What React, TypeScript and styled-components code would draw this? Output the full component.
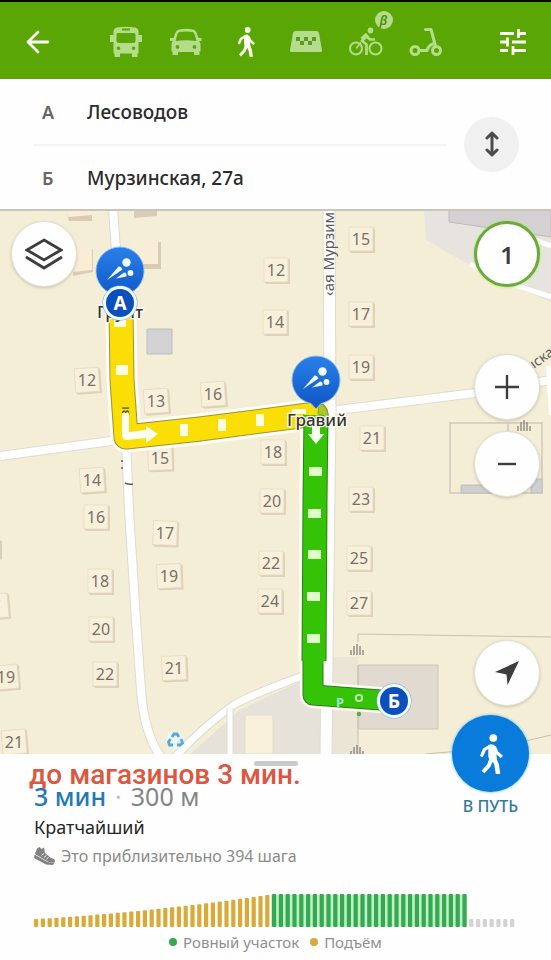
import React from 'react';
import styled, { createGlobalStyle, css } from 'styled-components';

const GlobalStyle = createGlobalStyle`
  *, *::before, *::after { box-sizing: border-box; }
  body { margin: 0; background: #fefefe; font-family: 'Noto Sans', 'Open Sans', sans-serif; color: #2b2b2b; }
  button, input { font: inherit; color: inherit; }
`;

const Page = styled.main`
  display: flex;
  flex-direction: column;
  min-height: 100vh;
`;

const TopBar = styled.header`
  display: flex;
  align-items: center;
  justify-content: space-between;
  height: 79px;
  padding: 2px 8px 0;
  border-top: 2px solid #050a02;
  background: #59a604;
`;

const Modes = styled.nav`
  display: flex;
`;

const BarButton = styled.button<{ $dim?: boolean }>`
  position: relative;
  display: flex;
  align-items: center;
  justify-content: center;
  width: 60px;
  height: 60px;
  padding: 0;
  border: 0;
  background: none;
  color: ${(p) => (p.$dim ? '#b5dc8b' : '#fbfff2')};
`;

const Beta = styled.span`
  position: absolute;
  top: -1px;
  right: 3px;
  width: 18px;
  height: 18px;
  border-radius: 50%;
  background: #b5dc8b;
  color: #4f8f0a;
  font: italic 600 13px/18px 'Noto Sans', sans-serif;
  text-align: center;
`;

const Addresses = styled.form`
  display: flex;
  align-items: center;
  gap: 17px;
  padding: 0 32px 0 33px;
  background: #fefefe;
`;

const Fields = styled.div`
  flex: 1;
  min-width: 0;
`;

const Field = styled.div`
  display: flex;
  align-items: center;
  height: 65px;
  & + & { border-top: 2px solid #f5f5f5; }
`;

const FieldLabel = styled.label`
  width: 54px;
  padding-left: 9px;
  color: #666;
  font-size: 18px;
  font-weight: 600;
`;

const FieldInput = styled.input`
  flex: 1;
  min-width: 0;
  height: 40px;
  padding: 0;
  border: 0;
  background: none;
  font-size: 19px;
  font-weight: 500;
`;

const SwapButton = styled.button`
  display: grid;
  place-items: center;
  width: 55px;
  height: 55px;
  padding: 0;
  border: 0;
  border-radius: 50%;
  background: #f0f0f0;
  color: #4b4b4b;
`;

const MapArea = styled.section`
  position: relative;
  flex: 1;
  min-height: 440px;
  overflow: hidden;
  background: #f4eed6;
`;

const MapCanvas = styled.svg`
  position: absolute;
  inset: 0;
  width: 100%;
  height: 100%;
  font-family: 'Noto Sans', sans-serif;
`;

const MapControls = styled.div`
  position: absolute;
  inset: 12px 11px 48px;
  display: flex;
  align-items: flex-start;
  justify-content: space-between;
  pointer-events: none;
`;

const ControlColumn = styled.div`
  display: flex;
  flex-direction: column;
  height: 100%;
`;

const RoundButton = styled.button<{ $place?: 'bottom'; $ring?: boolean }>`
  display: grid;
  place-items: center;
  width: 66px;
  height: 66px;
  padding: 0;
  border: ${(p) => (p.$ring ? '3px solid #6aaa38' : '1px solid #e2dfd6')};
  border-radius: 50%;
  background: #fefefe;
  color: #3d3d3d;
  font-size: 24px;
  font-weight: 600;
  pointer-events: auto;
  box-shadow: ${(p) => (p.$ring ? '0 0 3px #a6e870' : '0 1px 3px rgba(110, 100, 80, 0.3)')};
  ${(p) => p.$place === 'bottom' && css`margin-top: auto;`}
`;

const ZoomGroup = styled.div`
  display: flex;
  flex-direction: column;
  gap: 11px;
  margin-top: 67px;
`;

const Sheet = styled.section`
  position: relative;
  padding: 7px 34px 4px;
  background: #fefefe;
`;

const Handle = styled.div`
  width: 44px;
  height: 5px;
  margin: 0 auto 13px;
  border-radius: 3px;
  background: #c9c9c9;
`;

const Note = styled.p`
  position: absolute;
  top: 4px;
  left: 29px;
  margin: 0;
  color: #dc5640;
  font: 500 28px/34px Roboto, sans-serif;
  white-space: nowrap;
`;

const Summary = styled.p`
  display: flex;
  gap: 9px;
  margin: 0;
  color: #858585;
  font-size: 25px;
  line-height: 34px;
`;

const Duration = styled.strong`
  color: #2279b5;
  font-weight: 500;
`;

const Separator = styled.span`
  color: #c0c0c0;
`;

const RouteName = styled.h1`
  margin: 0;
  color: #262626;
  font-size: 18px;
  font-weight: 400;
  line-height: 28px;
`;

const Steps = styled.p`
  display: flex;
  align-items: center;
  gap: 6px;
  margin: 0;
  color: #8b8b8b;
  font-size: 16px;
  line-height: 30px;
`;

const Chart = styled.svg`
  display: block;
  width: 100%;
  height: 34px;
  margin-top: 23px;
`;

const Legend = styled.ul`
  display: flex;
  justify-content: center;
  gap: 11px;
  margin: 0;
  padding: 0;
  color: #8f8f8f;
  font-size: 15px;
  line-height: 28px;
  list-style: none;
`;

const LegendItem = styled.li<{ $color: string }>`
  display: flex;
  align-items: center;
  gap: 6px;
  &::before {
    content: '';
    width: 8px;
    height: 8px;
    border-radius: 50%;
    background: ${(p) => p.$color};
  }
`;

const GoButton = styled.button`
  position: absolute;
  top: -39px;
  right: 22px;
  display: flex;
  flex-direction: column;
  align-items: center;
  width: 77px;
  padding: 0;
  border: 0;
  background: none;
  color: #35799a;
  font-size: 16px;
  font-weight: 500;
  line-height: 28px;
`;

const GoDisc = styled.span`
  display: grid;
  place-items: center;
  width: 77px;
  height: 77px;
  border-radius: 50%;
  background: #097bda;
  box-shadow: 0 0 3px #52b5f5;
  color: #fff;
`;

const BackIcon = () => (
  <svg width="24" height="24" viewBox="0 0 24 24" fill="none" stroke="currentColor" strokeWidth="2.8" strokeLinecap="round" strokeLinejoin="round">
    <path d="M22 12H2M12 2 2 12l10 10" />
  </svg>
);

const BusIcon = () => (
  <svg width="34" height="32" viewBox="0 0 34 32">
    <path fill="currentColor" fillRule="evenodd" d="M8 1.500Q17 0 26 1.500Q29.500 2 29.500 6v3h3.500v7h-3.500v11.500h-1V31H23v-3.500H11V31H5.500v-3.500h-1V16H1V9h3.500V6Q4.500 2 8 1.500ZM13 2.600v1.800h8V2.600ZM9 7Q7.500 7 7.500 8.500v6Q7.500 17 10 17h14q2.500 0 2.500-2.500v-6Q26.500 7 25 7ZM9.500 20.500a1.800 1.800 0 1 0 0 3.600 1.800 1.800 0 0 0 0-3.600ZM24.500 20.500a1.800 1.800 0 1 0 0 3.600 1.800 1.800 0 0 0 0-3.600Z" />
  </svg>
);

const CarIcon = () => (
  <svg width="34" height="28" viewBox="0 0 34 28">
    <path fill="currentColor" fillRule="evenodd" d="M10 1.500Q17 0 24 1.500q2.500.5 3.500 3L29.500 10h3v3H30q1.500 1.500 1.500 4v6.500h-1V27H25v-3H9v3H3.500v-3.500h-1V17Q2.500 14.500 4 13H1v-3h3.500l2-5.500q1-2.500 3.500-3ZM10.500 4Q9 4.300 8.500 6L6.500 13Q17 11.500 27.500 13l-2-7Q25 4.300 23.500 4 17 3 10.500 4ZM8.500 17a1.900 1.900 0 1 0 0 3.800 1.900 1.900 0 0 0 0-3.800ZM25.500 17a1.900 1.900 0 1 0 0 3.800 1.900 1.900 0 0 0 0-3.800Z" />
  </svg>
);

const WalkIcon = ({ width, height }: { width: number; height: number }) => (
  <svg width={width} height={height} viewBox="0 0 18 30" fill="none" stroke="currentColor" strokeLinecap="butt" strokeLinejoin="round">
    <circle cx="10.700" cy="3" r="2.900" fill="currentColor" stroke="none" />
    <path fill="currentColor" stroke="none" d="M7 8.500Q10 6.500 12 9l1 5 .5 6.500-5 1-1.500-4.500Z" />
    <path strokeWidth="2.400" d="M8.500 9 4 11.800 1.700 17M11.500 9.500l2 4.500 3.700 3.200" />
    <path strokeWidth="3" d="M9.500 18 7.500 23.500 3 28.500" />
    <path strokeWidth="3.400" d="m11 18 2.200 5L14.300 30" />
  </svg>
);

const TaxiIcon = () => (
  <svg width="34" height="24" viewBox="0 0 34 24">
    <path fill="currentColor" d="M7 1h20q2.500 0 3 2l3 17q.5 2-1 2H2Q.500 22 1 20L4 3q.5-2 3-2Z" />
    <path fill="#5b9a22" d="M7 7h4v4H7ZM15 7h4v4h-4ZM23 7h4v4h-4ZM11 11h4v4h-4ZM19 11h4v4h-4Z" />
  </svg>
);

const BikeIcon = () => (
  <svg width="34" height="30" viewBox="0 0 34 30" fill="none" stroke="currentColor" strokeWidth="2">
    <circle cx="7" cy="21.500" r="6" />
    <circle cx="26.500" cy="21.500" r="6" />
    <circle cx="21.500" cy="3.500" r="2.900" fill="currentColor" stroke="none" />
    <path strokeWidth="4.500" strokeLinejoin="round" d="m18.500 7.500-5.500 5" />
    <path strokeWidth="2.700" strokeLinejoin="round" d="m12 13 5.500 4.500V28M17.500 9l3.500 3.500h5" />
    <path strokeWidth="1.500" d="m7 21.500 5-6" />
  </svg>
);

const ScooterIcon = () => (
  <svg width="34" height="30" viewBox="0 0 34 30" fill="none" stroke="currentColor" strokeWidth="3" strokeLinecap="round" strokeLinejoin="round">
    <circle cx="6" cy="23.500" r="4" />
    <circle cx="27.500" cy="23.500" r="4" />
    <path d="M10.500 23.500H18q2-6.500 8-7M16.500 2.500H22L26.500 19" />
  </svg>
);

const FilterIcon = () => (
  <svg width="26" height="26" viewBox="0 0 26 26" fill="none" stroke="currentColor" strokeWidth="2.800">
    <path d="M0 4.500h14M18.500 0v9M18 4.500h8M0 13h8M7.500 8.500v9M12 13h14M0 21.500h8M13 17v9M13 21.500h13" />
  </svg>
);

const SwapIcon = () => (
  <svg width="16" height="26" viewBox="0 0 16 26" fill="none" stroke="currentColor" strokeWidth="3" strokeLinecap="round" strokeLinejoin="round">
    <path d="M8 2v22M3 7l5-5 5 5M3 19l5 5 5-5" />
  </svg>
);

const LayersIcon = () => (
  <svg width="38" height="32" viewBox="0 0 38 32" fill="none" stroke="currentColor" strokeWidth="2.800">
    <path d="m19 2 17 10-17 10L2 12ZM1 19l18 11 18-11" />
  </svg>
);

const PlusMinusIcon = ({ plus }: { plus?: boolean }) => (
  <svg width="24" height="24" viewBox="0 0 24 24" stroke="currentColor" strokeWidth="2.400">
    <path d={plus ? 'M0 12h24M12 0v24' : 'M3 12h18'} />
  </svg>
);

const LocateIcon = () => (
  <svg width="24" height="24" viewBox="0 0 24 24" fill="currentColor">
    <path d="M24 0 12.500 24 11.500 13.500 0 11Z" />
  </svg>
);

const ShoeIcon = () => (
  <svg width="21" height="20" viewBox="0 0 21 20">
    <path fill="#828282" d="M3 2.500 5.500 1l2 2L10 1.500l1 5.500 6 5q4 .5 4 3l-.5 1.500-6-.5L1 8Z" />
    <path fill="#828282" d="M.500 8.500 13.500 16l7 .7-1.500 2.300-7-.5L0 12Z" />
    <path stroke="#fefefe" strokeWidth="1" d="m10 7.500-2.500 1.800M12.500 9.500 10 11.300M14.500 11.500 12.500 13" />
  </svg>
);

const HOUSES: [string, number, number, number][] = [
  ['15', 361, 239, 0], ['12', 276, 270, 0], ['14', 275, 322, 0], ['17', 361, 314, 0],
  ['19', 361, 367, 0], ['12', 87, 380, -4], ['13', 156, 401, -4], ['16', 213, 394, -4],
  ['15', 160, 458, -2], ['18', 273, 452, 0], ['21', 372, 438, 0], ['14', 92, 480, -4],
  ['16', 96, 517, 0], ['17', 165, 533, 2], ['20', 272, 501, 0], ['23', 361, 499, 0],
  ['18', 100, 581, 0], ['19', 169, 576, -2], ['22', 271, 563, 0], ['25', 359, 558, 0],
  ['24', 270, 601, 0], ['27', 359, 603, 0], ['20', 101, 629, 0], ['22', 105, 674, 0],
  ['21', 174, 668, -2], ['19', 6, 677, -5], ['21', 14, 742, -5], ['7', -4, 606, -5],
];

const ROUTE_YELLOW = 'M121 312 122 380 126 437 200 429 316 414';
const ROUTE_GREEN = 'M316 414 315 500 314 661';
const ROUTE_TAIL = 'M313 655V695L394 701';

const House = ({ label, x, y, angle }: { label: string; x: number; y: number; angle: number }) => (
  <g transform={`translate(${x} ${y})`}>
    <g transform={`rotate(${angle})`}>
      <path d="M-12-12h24l2 2v24h-24l-2-2Z" fill="#ddd1b8" />
      <path d="M-12-12h24v24h-24Z" fill="#f9f0db" stroke="#e4d9bf" strokeWidth="0.700" />
    </g>
    <text y="6" textAnchor="middle" fontSize="16" fill="#77716a">{label}</text>
  </g>
);

const SurfacePin = ({ x, y }: { x: number; y: number }) => (
  <g transform={`translate(${x} ${y})`}>
    <path d="M0 29-5 23.500A24 24 0 1 1 5 23.500Z" fill="url(#pin)" stroke="#8fc2f0" strokeWidth="1" />
    <g fill="#f2fbff">
      <circle cx="6.500" cy="-8.500" r="4.200" />
      <circle cx="10.500" cy="2" r="2.900" />
      <path d="m-13 9 11.500-13.500Q1-5 2.500-1.500ZM-4 7.500 4 1.500q3 0 2.500 4Z" />
    </g>
  </g>
);

const EndMarker = ({ x, y, label }: { x: number; y: number; label: string }) => (
  <g>
    <circle cx={x} cy={y} r="17.500" fill="#78a7d4" />
    <circle cx={x} cy={y} r="17" fill="#f1faff" />
    <circle cx={x} cy={y} r="14" fill="#0b4fbd" />
    <text x={x} y={y + 7} textAnchor="middle" fontSize="19" fontWeight="700" fill="#fff">{label}</text>
  </g>
);

const Gate = ({ x, y }: { x: number; y: number }) => (
  <path d={`M${x - 6} ${y + 5}v-5M${x - 3} ${y + 5}v-9M${x} ${y + 5}v-11M${x + 3} ${y + 5}v-9M${x + 6} ${y + 5}v-5`} stroke="#88807a" strokeWidth="1.300" />
);

const Road = ({ d, width }: { d: string; width: number }) => (
  <g fill="none" strokeLinejoin="round">
    <path d={d} stroke="#dedbd3" strokeWidth={width + 2} />
    <path d={d} stroke="#fefefe" strokeWidth={width} />
  </g>
);

const RouteLine = ({ d, color, edge, width }: { d: string; color: string; edge: string; width: number }) => (
  <g fill="none" strokeLinejoin="round">
    <path d={d} stroke={edge} strokeWidth={width + 1} />
    <path d={d} stroke={color} strokeWidth={width - 1} />
  </g>
);

const CityMap = () => (
  <MapCanvas viewBox="0 209 551 545" preserveAspectRatio="xMidYMid slice" role="img" aria-label="Карта маршрута">
    <defs>
      <linearGradient id="pin" x1="0" y1="0" x2="0" y2="1">
        <stop offset="0" stopColor="#2b80ea" />
        <stop offset="1" stopColor="#0d55c2" />
      </linearGradient>
    </defs>
    <path d="M0 209h551v545H0Z" fill="#f4eed6" />
    <path d="M424 209h127v93l-40-17-45-22-40-23Z" fill="#e7e4df" />
    <path d="M449 209h102v28l-102-15Z" fill="#d3d1d1" stroke="#bdbbbb" strokeWidth="1" />
    <path d="m535 240 16 6M470 264l45 21 36 12" fill="none" stroke="#fefefe" strokeWidth="5" />
    <path d="M190 754 240 710 303 680 320 690V754Z" fill="#e6e2d9" />
    <path d="M333 657h25v97h-26Z" fill="#ebe5d5" />
    <path d="M358 665h80v64h-80Z" fill="#e0dad0" stroke="#cdc6bb" strokeWidth="1" />
    <path d="M358 642v-8l193 3M358 665v89M425 754q75-5 126-19" fill="none" stroke="#c9beb0" strokeWidth="1" />
    <path d="M450 423h92v70h-92ZM508 423v15" fill="none" stroke="#cfc9bb" strokeWidth="1.500" />
    <path d="M461 485h30v8h-30ZM531 479h11v14h-11Z" fill="#d0cfd0" stroke="#bfbcbc" strokeWidth="1" />
    <path d="M66 210h26v11h-23ZM75 249h18v23l-20 4ZM136 242h25v27h-25ZM134 210h23v6l-23 2Z" fill="#d8ccb7" />
    <path d="M66 210h26v5l-24 2ZM73 248h19v22l-19 2ZM134 241h24v23h-24Z" fill="#f9edd6" />
    <path d="M147 329h25v25h-25Z" fill="#d2d2d4" stroke="#bdbdbd" strokeWidth="1" />
    <path d="M0 540l2 1v18l-2 1Z" fill="#d8ceb9" />

    <Road d="M113 209 119 290 126 440 129 510 136 620 141 690Q144 735 163 760" width={8} />
    <Road d="M0 456 126 439 330 411 475 393 551 380" width={8} />
    <Road d="M329 209 330 410 327 660 326 756" width={11} />
    <Road d="M306 675Q260 691 235 704 205 725 174 758" width={7} />
    <Road d="M230 708V756" width={5} />
    <path d="M546 366h5v49h-2Z" fill="#fefefe" />
    <path d="M245 715h28v39h-28Z" fill="#f8f0db" stroke="#e5dcc6" strokeWidth="1" />

    {HOUSES.map(([label, x, y, angle]) => (
      <House key={`${label}-${x}-${y}`} label={label} x={x} y={y} angle={angle} />
    ))}
    <Gate x={524} y={426} />
    <Gate x={357} y={650} />
    <Gate x={357} y={751} />

    <g fill="#5f5a5c" fontSize="15">
      <text transform="translate(334 296) rotate(-90)">‹ая Мурзим</text>
      <text transform="translate(534 369) rotate(-35)" fontSize="14">ıска</text>
    </g>
    <path d="M125 483q4 2 8 1M122 460v2M122 467v2" fill="none" stroke="#5f5a5c" strokeWidth="1.500" />

    <g fill="none" stroke="#fffef4" strokeLinejoin="round">
      <path d={ROUTE_YELLOW} strokeWidth="31" />
      <path d={ROUTE_GREEN} strokeWidth="31" />
      <path d={ROUTE_TAIL} strokeWidth="26" />
    </g>
    <circle cx="316" cy="414" r="12" fill="#a7c62b" stroke="#748a38" strokeWidth="1" />
    <RouteLine d={ROUTE_YELLOW} color="#fade05" edge="#9d9238" width={24} />
    <RouteLine d={ROUTE_TAIL} color="#34c307" edge="#2b7c20" width={20} />
    <RouteLine d={ROUTE_GREEN} color="#34c307" edge="#2b7c20" width={24} />
    <path d="M304 655h19v8h-19Z" fill="#34c307" />
    <path d="M304 415V405L316 403Q328 405 328 415Z" fill="#fade05" />
    <path d="M319 403Q328 406 328 417L318 414Z" fill="#a9c62a" stroke="#748a38" strokeWidth="0.700" />

    <g fill="#fffce0">
      <path d="M114 319h12v8h-12ZM116 365h12v10h-12ZM180 424h8v12h-8ZM218 419h8v12h-8ZM256 414h8v12h-8ZM292 409h14v5h-14Z" />
    </g>
    <g fill="#dfffc9">
      <path d="M309 467h13v9h-13ZM308 509h13v9h-13ZM308 550h13v9h-13ZM307 592h13v9h-13ZM307 634h13v9h-13Z" />
    </g>
    <text transform="translate(129 416) rotate(-90)" fontSize="13" fill="#4e482b">зı</text>
    <path d="M122 413h7v19l17-2v-4l12 8-12 9v-5l-19 2q-5 0-5-5Z" fill="#fffef2" />
    <path d="M312 420h8v14h4l-8 10-8-10h4Z" fill="#f4fff0" />
    <text x="340" y="707" textAnchor="middle" fontSize="13" fontWeight="700" fill="#9ee3d2">P</text>
    <circle cx="359" cy="698" r="3.200" fill="none" stroke="#c8f5b4" strokeWidth="1.800" />
    <circle cx="359" cy="714" r="2.200" fill="#5aab4a" />

    <circle cx="175" cy="740" r="9" fill="#e9f7fb" />
    <g fill="none" stroke="#58a7d4" strokeWidth="2.800">
      <path d="m172 737 2-3h3l2 3M181 739l1.500 4-2 2H177M173 745h-3.500l-1-3 2-3" />
    </g>

    <SurfacePin x={120} y={271} />
    <SurfacePin x={316} y={380} />
    <g fontSize="17" fontWeight="500" fill="#35332f" stroke="#fffdf2" strokeWidth="2.500" paintOrder="stroke" textAnchor="middle">
      <text x="120" y="318">Грунт</text>
      <text x="317" y="426">Гравий</text>
    </g>
    <EndMarker x={120} y={303} label="А" />
    <EndMarker x={394} y={701} label="Б" />
    <path d="M0 210h551" stroke="#c9c5b9" strokeWidth="2" />
  </MapCanvas>
);

const CLIMB = 35;
const FLAT = 29;
const REST = 7;
const BARS = Array.from({ length: CLIMB + FLAT + REST }, (_, i) => {
  if (i < CLIMB) {
    const t = i / (CLIMB - 1);
    return { height: 8 + 14 * t + 10 * t * t, color: '#d9aa37' };
  }
  return i < CLIMB + FLAT ? { height: 33, color: '#37a852' } : { height: 8, color: '#d3d3d3' };
});
const STEP = 6.8;

const ElevationChart = () => (
  <Chart viewBox="0 0 483 34" preserveAspectRatio="none" role="img" aria-label="Профиль высот">
    <rect x={CLIMB * STEP - 1} y="1" width={FLAT * STEP - 1} height="32" fill="#bdf0c2" />
    {BARS.map((bar, i) => (
      <rect key={i} x={i * STEP} y={33 - bar.height} width="4.200" height={bar.height} rx="1" fill={bar.color} />
    ))}
  </Chart>
);

export default function App() {
  return (
    <Page>
      <GlobalStyle />
      <TopBar>
        <BarButton aria-label="Назад"><BackIcon /></BarButton>
        <Modes aria-label="Способ передвижения">
          <BarButton $dim aria-label="Автобус"><BusIcon /></BarButton>
          <BarButton $dim aria-label="Автомобиль"><CarIcon /></BarButton>
          <BarButton aria-label="Пешком"><WalkIcon width={18} height={30} /></BarButton>
          <BarButton $dim aria-label="Такси"><TaxiIcon /></BarButton>
          <BarButton $dim aria-label="Велосипед"><BikeIcon /><Beta>β</Beta></BarButton>
          <BarButton $dim aria-label="Самокат"><ScooterIcon /></BarButton>
        </Modes>
        <BarButton aria-label="Настройки"><FilterIcon /></BarButton>
      </TopBar>

      <Addresses onSubmit={(e) => e.preventDefault()}>
        <Fields>
          <Field>
            <FieldLabel htmlFor="from">А</FieldLabel>
            <FieldInput id="from" defaultValue="Лесоводов" />
          </Field>
          <Field>
            <FieldLabel htmlFor="to">Б</FieldLabel>
            <FieldInput id="to" defaultValue="Мурзинская, 27а" />
          </Field>
        </Fields>
        <SwapButton type="button" aria-label="Поменять местами"><SwapIcon /></SwapButton>
      </Addresses>

      <MapArea>
        <CityMap />
        <MapControls>
          <RoundButton aria-label="Слои"><LayersIcon /></RoundButton>
          <ControlColumn>
            <RoundButton $ring>1</RoundButton>
            <ZoomGroup>
              <RoundButton aria-label="Приблизить"><PlusMinusIcon plus /></RoundButton>
              <RoundButton aria-label="Отдалить"><PlusMinusIcon /></RoundButton>
            </ZoomGroup>
            <RoundButton $place="bottom" aria-label="Моё местоположение"><LocateIcon /></RoundButton>
          </ControlColumn>
        </MapControls>
      </MapArea>

      <Sheet>
        <Handle />
        <Summary>
          <Duration>3 мин</Duration>
          <Separator>·</Separator>
          <span>300 м</span>
        </Summary>
        <Note>до магазинов 3 мин.</Note>
        <RouteName>Кратчайший</RouteName>
        <Steps><ShoeIcon />Это приблизительно 394 шага</Steps>
        <ElevationChart />
        <Legend>
          <LegendItem $color="#37a852">Ровный участок</LegendItem>
          <LegendItem $color="#d9aa37">Подъём</LegendItem>
        </Legend>
        <GoButton><GoDisc><WalkIcon width={24} height={40} /></GoDisc>В ПУТЬ</GoButton>
      </Sheet>
    </Page>
  );
}
